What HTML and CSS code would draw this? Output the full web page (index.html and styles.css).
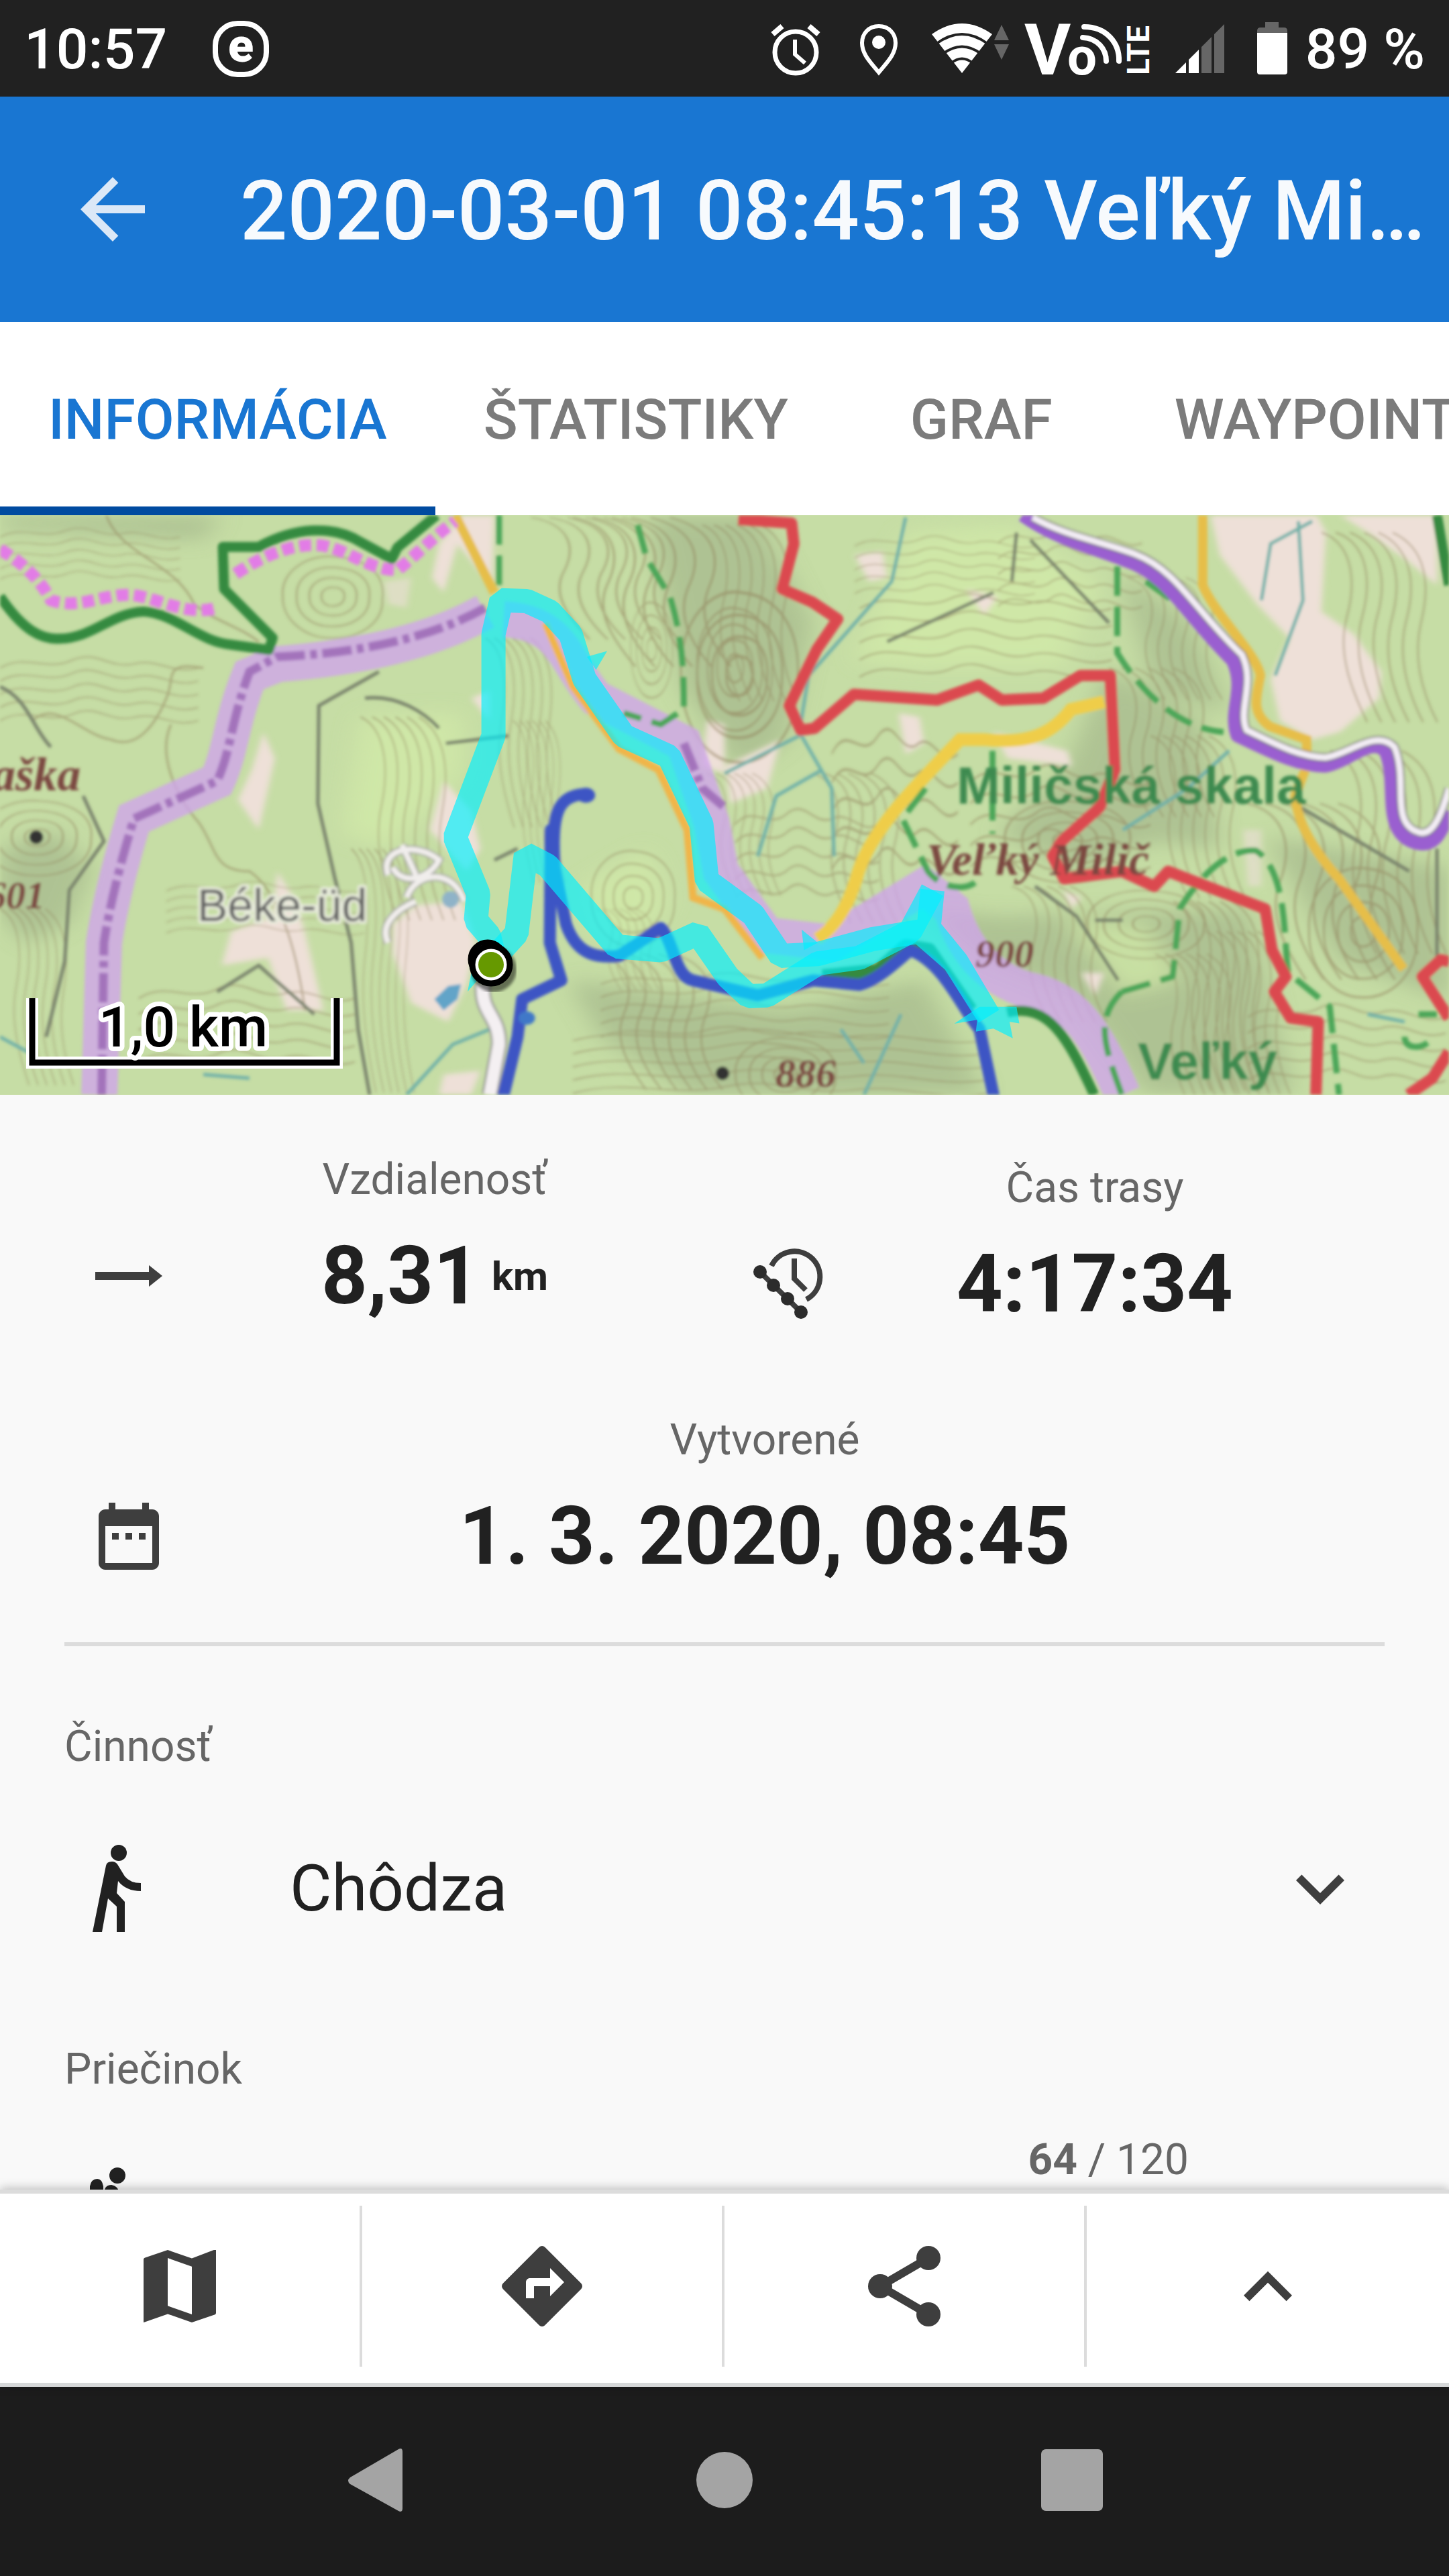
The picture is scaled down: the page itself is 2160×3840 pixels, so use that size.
FILE: index.html
```html
<!DOCTYPE html>
<html lang="sk">

<head>
  <meta charset="utf-8">
  <title>Veľký Milič</title>
  <link rel="stylesheet" href="styles.css">
</head>

<body>
  <div class="status-bar">
    <span class="status-time">10:57</span>
    <svg class="status-icon" width="84" height="84" viewBox="0 0 84 84">
      <rect x="4" y="4" width="76" height="76" rx="33" fill="none" stroke="#fff" stroke-width="8" />
      <text class="badge-letter" x="42" y="61" text-anchor="middle">e</text>
    </svg>
    <div class="status-right">
      <!-- alarm -->
      <svg class="status-icon" width="96" height="84" viewBox="0 0 96 84">
        <g fill="none" stroke="#fff" stroke-width="7">
          <circle cx="40" cy="47" r="31" />
          <path d="M39 28v22l15 13" stroke-width="6" />
          <path d="M6 20L20 8M74 20L60 8" stroke-width="8" />
        </g>
      </svg>
      <!-- location -->
      <svg class="status-icon" width="96" height="84" viewBox="0 0 96 84">
        <path d="M44 8C29 8 19 19 19 33C19 50 32 62 44 77C56 62 69 50 69 33C69 19 59 8 44 8Z" fill="none" stroke="#fff" stroke-width="6" />
        <circle cx="44" cy="32" r="10" fill="#fff" />
      </svg>
      <!-- wifi -->
      <svg class="status-icon" width="120" height="84" viewBox="0 0 120 84">
        <path d="M48 78L3 20Q48 -12 93 20Z" fill="#fff" />
        <path d="M10 34Q48 6 86 34M20 49Q48 28 76 49M32 63Q48 50 64 63" fill="none" stroke="#212121" stroke-width="4" />
        <path d="M107 6l11 23H96zM107 58l11-23H96z" fill="#666" />
      </svg>
      <!-- VoLTE -->
      <svg class="status-icon" width="186" height="84" viewBox="0 0 186 84">
        <text class="volte-v" x="-3" y="80">V</text>
        <text class="volte-o" x="61" y="80">o</text>
        <path d="M86 9C120 9 139 34 138 60M84 25C106 26 119 42 119 60" fill="none" stroke="#fff" stroke-width="8" stroke-linecap="round" />
        <text class="volte-lte" transform="translate(183 81) rotate(-90)">LTE</text>
      </svg>
      <!-- signal -->
      <svg class="status-icon" width="110" height="84" viewBox="0 0 110 84">
        <path d="M12 78L28 62V78ZM32 58L47 43V78H32Z" fill="#fff" />
        <path d="M51 39L66 24V78H51ZM70 20L85 5V78H70Z" fill="#666" />
      </svg>
      <!-- battery -->
      <svg class="status-icon" width="48" height="84" viewBox="0 0 48 84">
        <path d="M12 2h20v8h8q5 0 5 5v4H0v-4q0-5 5-5h7z" fill="#666" />
        <path d="M0 18h45v58q0 4-4 4H4q-4 0-4-4z" fill="#fff" />
      </svg>
      <span>89 %</span>
    </div>
  </div>

  <header class="app-bar">
    <button class="back-button" aria-label="Späť">
      <svg width="144" height="144" viewBox="0 0 24 24">
        <path d="M20 11H7.800l5.600-5.600L12 4l-8 8 8 8 1.400-1.400L7.800 13H20z" fill="#dbe8f7" />
      </svg>
    </button>
    <h1>2020-03-01 08:45:13 Veľký Mi…</h1>
  </header>

  <nav class="tabs">
    <a href="#" class="tab active">INFORMÁCIA</a>
    <a href="#" class="tab">ŠTATISTIKY</a>
    <a href="#" class="tab">GRAF</a>
    <a href="#" class="tab">WAYPOINTY</a>
  </nav>

  <svg class="map" viewBox="0 0 2160 864" preserveAspectRatio="xMidYMid slice">
    <defs>
      <g id="hill">
        <path d="M-90 0C-95-60-40-95 5-88C60-84 96-50 90 5C92 60 45 96-5 92C-50 92-92 50-90 0Z" />
        <path d="M-65 2C-68-45-30-68 5-64C45-60 70-38 66 4C66 44 32 68-4 66C-38 66-66 38-65 2Z" />
        <path d="M-42 0C-44-28-20-44 4-41C30-40 46-24 43 3C43 28 20 44-3 42C-25 42-43 24-42 0Z" />
        <path d="M-20 0C-22-14-8-22 2-20C14-20 23-12 21 1C21 14 10 22-2 21C-12 21-21 12-20 0Z" />
      </g>
      <g id="ridge">
        <path d="M0 0C60 20 70 90 50 160C30 230 60 300 90 360" />
        <path d="M28 0C90 20 100 90 80 160C60 230 85 300 118 360" />
        <path d="M56 0C120 25 130 95 108 165C92 230 112 300 145 360" />
        <path d="M84 0C150 25 158 95 138 165C120 235 140 300 172 360" />
        <path d="M112 0C180 30 186 100 166 170C150 235 168 300 200 360" />
        <path d="M140 0C208 30 214 100 196 170C180 235 196 300 228 360" />
      </g>
      <g id="waves">
        <path d="M0 40C50 0 90 50 140 20C190-10 210 40 260 30C310 10 340 60 390 40" />
        <path d="M0 75C50 35 90 85 140 55C190 25 210 75 260 65C310 45 340 95 390 75" />
        <path d="M0 110C50 70 90 120 140 92C190 60 210 112 260 100C310 80 340 130 390 110" />
        <path d="M0 145C50 105 90 155 140 128C190 96 210 148 260 136C310 116 340 166 390 145" />
        <path d="M0 180C50 140 90 190 140 164C190 132 210 184 260 172C310 152 340 202 390 180" />
      </g>
      <filter id="shade" x="-20%" y="-20%" width="140%" height="140%"><feGaussianBlur stdDeviation="26" /></filter>
      <filter id="edge" x="-10%" y="-10%" width="120%" height="120%"><feGaussianBlur stdDeviation="6" /></filter>
      <filter id="soft" x="0" y="0" width="100%" height="100%"><feGaussianBlur stdDeviation="2" /></filter>
    </defs>

    <rect width="2160" height="864" fill="#c6dda5" />

    <g filter="url(#soft)">
      <svg class="terrain" width="2160" height="864" viewBox="0 14 3136 1540" preserveAspectRatio="none">
        <!-- hill shading -->
        <g fill="#9fb187" opacity=".6" filter="url(#shade)">
          <path d="M0 14H480L440 80L150 60L0 50Z" />
          <path d="M1400 14H1640L1760 300L1700 620L1600 700L1480 480Z" />
          <path d="M0 900L120 850L200 950L150 1100L60 1150L0 1080Z" />
          <path d="M2400 420L2600 560L2640 900L2500 880L2330 960L2160 860L2300 700Z" />
          <path d="M2000 1060L2160 1080L2700 1060L2800 1554H2480L2330 1300L2130 1200Z" />
          <path d="M1230 1250L1700 1330L2000 1250L2130 1554H1500L1300 1400Z" />
          <path d="M2740 870L3136 950V1300L2900 1200Z" />
          <path d="M2420 160L2580 300L2660 540L2500 480Z" />
        </g>
        <!-- lighter woods -->
        <g fill="#d3eba9" opacity=".7" filter="url(#shade)">
          <path d="M1960 60L2200 40L2380 200L2300 420L2000 420L1850 400Z" />
          <path d="M1260 1000L1400 900L1450 1040L1380 1150L1290 1120Z" />
          <path d="M2300 1080L2480 1100L2560 1250L2430 1290Z" />
          <path d="M780 550L1000 540L1000 700L850 900L740 860Z" />
        </g>
        <!-- meadows and fields -->
        <g fill="#eee0d8" filter="url(#edge)">
          <path d="M1000 14H1070L1065 200L1030 150L990 90L960 220L935 180L950 90Z" />
          <path d="M2620 14H2850L2870 60L2860 270L2930 330L2990 430L2985 500L2900 590L2840 610L2770 560L2750 450L2790 340L2720 250L2640 120Z" />
          <path d="M2900 14H3110V200L3040 130L2960 60Z" />
          <path d="M570 590L595 660L560 850L515 770L545 690Z" />
          <path d="M600 960L640 1040L660 1120L700 1330L620 1330L580 1190L480 1210L500 1120L590 1080Z" />
          <path d="M960 720L1020 800L1040 900L1010 960L930 850Z" />
          <path d="M900 1050L1000 1040L1030 1150L1010 1260L970 1360L890 1310L850 1180L850 1100Z" />
          <path d="M1570 680L1690 610L1660 740L1580 780Z" />
          <path d="M1945 540L1990 550L2000 620L1960 650Z" />
          <path d="M2150 590L2310 640L2320 680L2180 660Z" />
          <path d="M1020 500L1060 480V560Z" />
          <path d="M2090 210L2160 230L2130 280Z" />
          <path d="M1850 120L1910 110L1920 180L1880 190Z" />
          <path d="M2300 1010L2340 1030L2320 1060Z" />
          <path d="M2340 1230L2390 1230L2370 1290Z" />
          <path d="M960 1500L1040 1490L1020 1554H950Z" />
          <path d="M1530 560L1568 570V700L1520 680Z" />
          <path d="M2690 850H2730V1000H2700ZM830 190L890 180L880 260L840 250Z" opacity=".6" />
        </g>

        <!-- contour lines -->
        <g class="contours">
          <use href="#hill" transform="translate(720 230) scale(1.2 1.2)" />
          <use href="#hill" transform="translate(80 870) scale(1.3 1.1)" />
          <use href="#hill" transform="translate(1370 1030) scale(1 1.4)" />
          <use href="#hill" transform="translate(1590 420) scale(.9 1.8)" />
          <use href="#hill" transform="translate(1600 440) scale(1.4 2.5)" />
          <use href="#hill" transform="translate(1410 370) scale(.5 1.4)" />
          <use href="#hill" transform="translate(2480 1100) scale(1.4 1)" />
          <use href="#hill" transform="translate(1700 1500) scale(1.2 1.1)" />
          <use href="#hill" transform="translate(2310 880) scale(1.5 1.2)" />
          <use href="#hill" transform="translate(2950 1120) scale(1.3 1.9)" />
          <use href="#ridge" transform="translate(1150 20) scale(1.4 .9)" />
          <use href="#ridge" transform="translate(1240 20) scale(1.5 1.1)" />
          <use href="#ridge" transform="translate(780 550) scale(.9 1.5)" />
          <use href="#ridge" transform="translate(760 900) scale(.6 1.8)" />
          <use href="#ridge" transform="translate(1050 340) scale(.7 1.4)" />
          <use href="#ridge" transform="translate(1110 560) scale(.5 1.2)" />
          <use href="#ridge" transform="translate(1290 1180) scale(1.2 1)" />
          <use href="#ridge" transform="translate(1520 40) scale(.9 1.3)" />
          <use href="#ridge" transform="translate(1530 700) scale(.7 .9)" />
          <use href="#ridge" transform="translate(2400 420) scale(1 1.1)" />
          <use href="#ridge" transform="translate(2490 600) scale(.9 1.2)" />
          <use href="#ridge" transform="translate(2540 1040) scale(.9 1.4)" />
          <use href="#ridge" transform="translate(2440 180) scale(.9 .9)" />
          <use href="#ridge" transform="translate(2700 780) scale(1.4 1.3)" />
          <use href="#ridge" transform="translate(2880 640) scale(1.1 1.5)" />
          <use href="#ridge" transform="translate(2500 1180) scale(.8 1.1)" />
          <use href="#ridge" transform="translate(2610 1120) scale(.8 1.2)" />
          <use href="#ridge" transform="translate(2190 1000) scale(.9 1)" />
          <use href="#ridge" transform="translate(0 1060) scale(.7 1.3)" />
          <use href="#ridge" transform="translate(2860 60) scale(1.1 1.4)" />
          <use href="#ridge" transform="translate(1290 1060) scale(.6 .6)" />
          <use href="#ridge" transform="translate(1760 700) scale(.9 1.1)" />
          <use href="#waves" transform="translate(1860 210) scale(1.4 1.3)" />
          <use href="#waves" transform="translate(1850 60) scale(1 .9)" />
          <use href="#waves" transform="translate(1800 560) scale(.7 2.2)" />
          <use href="#waves" transform="translate(1590 780) scale(.8 1.4)" />
          <use href="#waves" transform="translate(0 380) scale(1.1 1)" />
          <use href="#waves" transform="translate(0 40) scale(1 .8)" />
          <use href="#waves" transform="translate(1300 1220) scale(1.6 1)" />
          <use href="#waves" transform="translate(1240 1370) scale(2.3 1)" />
          <use href="#waves" transform="translate(2700 1300) scale(1.1 1.2)" />
          <use href="#waves" transform="translate(300 1250) scale(1.2 1.2)" />
          <use href="#waves" transform="translate(2100 660) scale(1 1.6)" />
          <use href="#waves" transform="translate(2160 40) scale(.8 1.2)" />
          <use href="#waves" transform="translate(360 980) scale(1.1 .8)" />
          <path d="M70 560C120 500 180 600 240 610C300 640 340 560 360 500C380 450 350 400 440 420" />
          <path d="M370 570C340 650 380 760 430 830C470 900 460 960 540 960C600 1010 640 1150 660 1330" />
          <path d="M230 14C260 120 380 140 420 250C470 300 520 310 560 350" />
        </g>

        <!-- paths and streams -->
        <g class="footpaths">
          <path d="M820 430L690 520L688 780L725 980L760 1150L775 1380L800 1554" />
          <path d="M790 500C860 490 920 540 950 580" />
          <path d="M0 470C60 500 70 580 110 630" />
          <path d="M180 760L225 880L150 1010L140 1200L100 1400" />
          <path d="M2200 60L2190 190M2230 80L2400 300M1920 350L2150 220" />
          <path d="M2240 1000L2330 1080L2420 1250M2370 1090H2430" />
          <path d="M3110 900V1200M2800 780L3050 960" />
          <path d="M965 620L1100 600M1070 930L1120 900M470 1280L560 1210L680 1340" />
        </g>
        <g class="streams">
          <path d="M1960 20L1930 190L1750 440L1730 590L1800 740L1805 920" />
          <path d="M1730 600L1568 700M1780 690L1680 760L1640 920" />
          <path d="M2810 30L2820 240L2760 440M2840 30L2750 90L2730 240" />
          <path d="M2660 640L2570 740L2430 850" />
          <path d="M880 1554L980 1420L1060 1380M0 1400L60 1440M440 1500L540 1510" />
          <path d="M1950 1340L1870 1554M1820 1380L1870 1470M2960 1340L3040 1360" />
        </g>

        <!-- village lanes and pond -->
        <g fill="none" stroke="#a3a3a3" stroke-width="12">
          <path d="M840 970C820 900 900 880 950 930C930 980 870 1000 850 950M880 1030C900 960 980 950 1005 1040M870 890L900 970M840 1150C820 1100 860 1060 900 1040" />
        </g>
        <g fill="none" stroke="#f1eeec" stroke-width="8">
          <path d="M840 970C820 900 900 880 950 930C930 980 870 1000 850 950M880 1030C900 960 980 950 1005 1040M870 890L900 970M840 1150C820 1100 860 1060 900 1040" />
        </g>
        <path d="M940 1300L970 1265L998 1260L990 1300L960 1330Z" fill="#62a4c8" />
        <ellipse cx="975" cy="1035" rx="18" ry="22" fill="#8fb3c8" />

        <!-- protected area border -->
        <g class="border-wide">
          <path d="M1050 270C950 340 800 390 600 410L540 440C500 560 500 640 470 720L290 820C270 900 240 1030 225 1150L215 1554" />
          <path d="M1090 290C1220 300 1220 400 1290 500L1480 620L1540 830L1560 960L1660 1130L1800 1150L2000 1000L2060 1060C2090 1190 2160 1260 2240 1280C2340 1310 2380 1420 2430 1554" />
        </g>
        <path class="border-dash" d="M1050 260C950 330 800 380 600 390L540 430C500 560 500 640 470 720L290 820C270 900 240 1030 225 1150L220 1554" />
        <path class="border-dash" d="M1480 620L1520 740L1568 790" />

        <!-- white roads -->
        <path d="M1045 1260C1040 1340 1080 1340 1080 1420L1060 1554" fill="none" stroke="#999" stroke-width="24" />
        <path d="M1045 1260C1040 1340 1080 1340 1080 1420L1060 1554" fill="none" stroke="#f4f0f2" stroke-width="18" />

        <!-- yellow roads -->
        <g fill="none" stroke="#e6be48" stroke-width="14">
          <path d="M985 14L1070 220" />
          <path d="M1180 300L1240 470L1340 635L1425 690L1487 850L1500 1030L1568 1060L1650 1190" stroke="#f0b548" stroke-width="11" />
          <path d="M2603 14V200C2630 280 2718 380 2728 440C2718 500 2708 540 2748 575L2828 610V680L2803 760C2808 850 2868 940 2898 980L3038 1220" />
          <path d="M2390 510L2318 530C2268 610 2208 620 2128 610L2078 610C1968 750 1888 850 1858 960C1838 1050 1808 1110 1768 1140" stroke="#efcd4a" stroke-width="19" />
        </g>

        <!-- hiking trails -->
        <g fill="none" stroke-linejoin="round">
          <g stroke="#e27be6" stroke-width="18" stroke-dasharray="18 8">
            <path d="M0 105C50 140 90 190 110 240C170 265 220 225 280 225C340 230 400 285 470 260" />
            <path d="M510 170C570 120 640 85 700 95C760 110 800 160 860 160C900 120 940 70 985 30" />
          </g>
          <g stroke="#348a40" stroke-width="15">
            <path d="M0 230C50 320 90 345 130 342C200 340 240 275 310 270C380 275 430 350 500 358L582 372L590 340L485 210L482 98L560 98C640 45 720 40 780 85L848 130L860 100L945 14" />
            <path d="M2180 1335C2270 1310 2310 1400 2368 1554" />
            <path d="M3110 14L3136 200" />
            <path d="M1780 1240L1900 1225L1960 1160L2010 1170L2100 1330" stroke-width="22" />
          </g>
          <g stroke="#4ba658" stroke-width="9" stroke-dasharray="44 16">
            <path d="M2418 150V380C2468 480 2548 580 2648 590" />
            <path d="M2003 740L1953 820L2008 960C2040 1010 2090 1010 2110 990" />
            <path d="M2148 640V860" />
            <path d="M2428 1280L2538 1240L2553 1060C2608 950 2668 900 2718 905C2788 960 2778 1150 2788 1230L2878 1320L2898 1554" />
            <path d="M2428 1280C2370 1350 2388 1420 2428 1554" />
            <path d="M1380 40L1400 130L1450 230C1480 350 1480 450 1480 530L1430 570L1350 540" />
            <path d="M1080 14V210" />
            <path d="M2480 190L2560 260M3040 1400C3040 1440 3090 1430 3100 1400M3070 1340H3110" />
          </g>
          <g stroke="#3d55c4" stroke-width="18" stroke-linecap="round">
            <path d="M1265 755C1200 760 1195 820 1200 950L1225 1100C1250 1190 1300 1190 1340 1185L1430 1110C1460 1150 1460 1240 1500 1250L1640 1290L1760 1250L1860 1262C1900 1250 1940 1200 1970 1170C2040 1200 2080 1320 2120 1380L2150 1554" />
            <path d="M1192 850L1190 1150L1215 1250L1130 1300L1120 1400L1090 1554" />
          </g>
          <circle cx="1268" cy="758" r="20" fill="#3d55c4" />
          <circle cx="1140" cy="1350" r="18" fill="#3f78c8" />
          <g stroke="#db4850" stroke-width="17">
            <path d="M1598 25L1713 35L1718 90L1693 210L1758 245L1813 290L1768 370L1708 520L1733 585L1763 580L1848 490L2028 505L2118 465L2168 505L2258 500L2338 440H2403L2413 690L2380 790L2298 880L2278 920L2303 980L2428 960L2498 1000L2528 960L2738 1060L2753 1170L2783 1240L2758 1280L2793 1350L2853 1360L2848 1554" />
            <path d="M3136 1350L3078 1240L3118 1195L3136 1200M3136 1440L3100 1510L3048 1554" />
          </g>
          <path d="M2213 14C2288 80 2368 100 2438 135C2528 170 2568 280 2668 400C2698 480 2658 530 2678 600C2748 640 2808 680 2868 680C2918 670 2968 600 2998 640C3028 720 2988 850 3058 882C3098 900 3118 870 3136 800" stroke="#9a5fd0" stroke-width="20" />
          <path d="M2235 20C2308 70 2388 85 2458 118C2548 160 2588 270 2688 385C2718 460 2678 530 2698 585C2758 620 2808 655 2868 658C2918 650 2978 580 3018 630C3048 720 3008 830 3068 855C3098 870 3118 820 3136 740" stroke="#777" stroke-width="13" />
          <path d="M2235 20C2308 70 2388 85 2458 118C2548 160 2588 270 2688 385C2718 460 2678 530 2698 585C2758 620 2808 655 2868 658C2918 650 2978 580 3018 630C3048 720 3008 830 3068 855C3098 870 3118 820 3136 740" stroke="#f3edf5" stroke-width="9" />
        </g>
      </svg>

      <g class="place-peak">
        <text x="-12" y="410" font-size="70">aška</text>
        <text x="-20" y="586" font-size="58">601</text>
        <text x="1381" y="536" font-size="68">Veľký Milič</text>
        <text x="1454" y="673" font-size="58">900</text>
        <text x="1156" y="852" font-size="60">886</text>
      </g>
      <circle cx="54" cy="480" r="10" fill="#333" />
      <circle cx="1077" cy="832" r="10" fill="#333" />
      <text class="place-village" x="294" y="605">Béke-üd</text>
      <g class="place-nature">
        <text x="1426" y="430" font-size="78">Miličská skala</text>
        <text x="1696" y="841" font-size="78">Veľký</text>
      </g>
    </g>

    <!-- recorded track -->
    <svg width="2160" height="864" viewBox="0 14 3136 1540" preserveAspectRatio="none">
      <g class="track">
        <path d="M1070 1190L1118 1125L1138 915L1185 945L1335 1160L1430 1170L1510 1125L1575 1240L1620 1292L1660 1290L1770 1205L1860 1190L1970 1120L2018 1010" />
        <path d="M2018 1010L2010 1110L2070 1200L2140 1345L2065 1200L1990 1120L1890 1140L1770 1180L1690 1185L1630 1075L1530 985L1518 835L1448 655L1350 600L1265 450L1235 330L1190 270L1140 242L1085 240L1068 330L1068 600L985 870L1035 1020L1030 1090L1058 1130L1070 1190" />
      </g>
      <path d="M2065 1365L2120 1320L2200 1320L2206 1364L2185 1360L2192 1404L2150 1378L2112 1386L2115 1355ZM1735 1115L1770 1150L1740 1170ZM1314 375L1270 390L1290 425ZM1012 1280L1020 1230L1040 1240Z" fill="#00f0ff" opacity=".65" />
    </svg>

    <!-- start and finish marker -->
    <circle cx="736" cy="677" r="34" fill="#000" opacity=".5" filter="url(#soft)" />
    <circle cx="727" cy="662" r="26" fill="#fff" stroke="#000" stroke-width="7" />
    <circle cx="732" cy="670" r="28" fill="#fff" stroke="#000" stroke-width="9" />
    <circle cx="732" cy="670" r="19" fill="#690" />

    <!-- scale -->
    <path d="M48 720V816H502V720" fill="none" stroke="#fff" stroke-width="18" />
    <path d="M48 720V816H502V720" fill="none" stroke="#000" stroke-width="9" />
    <text class="scale-text" x="273" y="792" text-anchor="middle">1,0 km</text>
  </svg>

  <main class="details">
    <div class="stats">
      <div class="stat stat-distance">
        <svg class="stat-icon" width="144" height="144" viewBox="0 0 144 144">
          <path d="M22 66h80V56l20 16-20 16V78H22z" fill="#3e3e3e" />
        </svg>
        <div class="stat-label">Vzdialenosť</div>
        <div class="stat-value">8,31<span class="unit">km</span></div>
      </div>
      <div class="stat">
        <svg class="stat-icon" width="144" height="144" viewBox="0 0 144 144">
          <g fill="none" stroke="#3e3e3e" stroke-width="8">
            <path d="M46 45A38 38 0 1 1 98 95" />
            <path d="M80 34V64L97 81" />
            <path d="M29 54L90 114" />
          </g>
          <g fill="#2c2c2c">
            <circle cx="29" cy="54" r="10" />
            <circle cx="49" cy="74" r="10" />
            <circle cx="70" cy="94" r="10" />
            <circle cx="90" cy="114" r="10" />
          </g>
        </svg>
        <div class="stat-label">Čas trasy</div>
        <div class="stat-value">4:17:34</div>
      </div>
      <div class="stat stat-wide">
        <svg class="stat-icon" width="120" height="120" viewBox="0 0 24 24">
          <path d="M9 11H7v2h2v-2zm4 0h-2v2h2v-2zm4 0h-2v2h2v-2zm2-7h-1V2h-2v2H8V2H6v2H5c-1.100 0-2 .9-2 2v14c0 1.100.9 2 2 2h14c1.100 0 2-.9 2-2V6c0-1.100-.9-2-2-2zm0 16H5V9h14v11z" fill="#3e3e3e" />
        </svg>
        <div class="stat-label">Vytvorené</div>
        <div class="stat-value">1. 3. 2020, 08:45</div>
      </div>
    </div>

    <label class="field-label" for="activity">Činnosť</label>
    <div class="field">
      <svg width="144" height="144" viewBox="0 0 144 144" fill="#212121">
        <circle cx="81" cy="19" r="12" />
        <path d="M62 38Q63 32 71 32Q76 32 79 36L90 54Q98 64 114 64V76Q92 76 80 61L78 79L90 92V137H78V99L65 87L56 137H42Z" />
      </svg>
      <select id="activity">
        <option>Chôdza</option>
      </select>
      <svg width="144" height="144" viewBox="0 0 24 24">
        <path d="M7.410 8.590L12 13.170l4.590-4.580L18 10l-6 6-6-6z" fill="#3e3e3e" />
      </svg>
    </div>

    <div class="field-label">Priečinok</div>
    <div class="field">
      <svg width="144" height="144" viewBox="0 0 144 144" fill="#212121">
        <circle cx="79" cy="19" r="12" />
        <path d="M38 60V35Q40 24 49 24Q56 24 58 35V60Z" />
        <path d="M60 40Q62 33 70 33Q76 34 79 38L90 58L112 66V76L82 66L78 82L90 96V140H78V102L65 92L56 140H42Z" />
      </svg>
      <div class="count"><b>64</b> / 120</div>
    </div>
  </main>

  <div class="actions">
    <button aria-label="Mapa">
      <svg width="144" height="144" viewBox="0 0 24 24">
        <path d="M20.500 3l-.16.030L15 5.100 9 3 3.360 4.900c-.21.070-.36.250-.36.480V21l.16-.03L9 18.900l6 2.100 5.640-1.900c.21-.07.36-.25.36-.48V3zM15 19l-6-2.110V5l6 2.110V19z" fill="#3e3e3e" />
      </svg>
    </button>
    <button aria-label="Navigovať">
      <svg width="144" height="144" viewBox="0 0 24 24">
        <path d="M21.710 11.290l-9-9a1 1 0 0 0-1.410 0l-9 9a1 1 0 0 0 0 1.410l9 9c.39.390 1.020.390 1.410 0l9-9a1 1 0 0 0 0-1.410zM14 14.500V12h-4v3H8v-4c0-.55.450-1 1-1h5V7.500l3.500 3.500-3.500 3.500z" fill="#3e3e3e" />
      </svg>
    </button>
    <button aria-label="Zdieľať">
      <svg width="144" height="144" viewBox="0 0 24 24">
        <path d="M18 5L6 12L18 19" fill="none" stroke="#3e3e3e" stroke-width="2" />
        <g fill="#3e3e3e">
          <circle cx="18" cy="5" r="3" />
          <circle cx="6" cy="12" r="3" />
          <circle cx="18" cy="19" r="3" />
        </g>
      </svg>
    </button>
    <button aria-label="Viac">
      <svg width="144" height="144" viewBox="0 0 24 24">
        <path d="M12 8.300l-6 6 1.410 1.410L12 11.130l4.590 4.580L18 14.300z" fill="#3e3e3e" />
      </svg>
    </button>
  </div>

  <div class="nav-bar">
    <button aria-label="Naspäť">
      <svg width="96" height="96" viewBox="0 0 96 96">
        <path d="M8 44L80 2Q86-1 86 6V90Q86 97 80 94L8 54Q2 49 8 44Z" fill="#a4a4a4" />
      </svg>
    </button>
    <button aria-label="Domov">
      <svg width="96" height="96" viewBox="0 0 96 96">
        <circle cx="48" cy="48" r="42" fill="#a4a4a4" />
      </svg>
    </button>
    <button aria-label="Prehľad">
      <svg width="96" height="96" viewBox="0 0 96 96">
        <rect x="2" y="2" width="92" height="92" rx="7" fill="#a4a4a4" />
      </svg>
    </button>
  </div>
</body>

</html>
```
FILE: styles.css
```css
:root {
  --blue: #1976d2;
  --dark-blue: #004ba0;
  --status: #212121;
  --text: #212121;
  --label: #666;
  --line: #dcdcdc;
}

* {
  box-sizing: border-box;
}

body {
  margin: 0;
  height: 100vh;
  display: flex;
  flex-direction: column;
  overflow: hidden;
  background-color: #f9f9f9;
  color: var(--text);
  font-family: Roboto, sans-serif;
}

button {
  border: none;
  padding: 0;
  background: none;
  cursor: pointer;
}

svg {
  display: block;
  flex-shrink: 0;
}

/* Status bar */
.status-bar {
  flex-shrink: 0;
  display: flex;
  align-items: center;
  height: 144px;
  padding: 2px 36px 0;
  background-color: var(--status);
  color: #fff;
  font-size: 84px;
  font-weight: 500;
}

.status-time {
  margin-right: 68px;
}

.status-right {
  display: flex;
  align-items: center;
  gap: 24px;
  margin-left: auto;
}

.status-icon {
  overflow: visible;
}

.status-icon text {
  fill: #fff;
  font-weight: 700;
}

.status-icon .badge-letter {
  font-size: 70px;
  font-weight: 900;
}

.volte-v {
  font-size: 106px;
}

.volte-o {
  font-size: 78px;
}

.volte-lte {
  font-size: 46px;
}

/* Title bar */
.app-bar {
  flex-shrink: 0;
  display: flex;
  align-items: center;
  gap: 118px;
  height: 336px;
  padding: 0 24px 0 96px;
  background-color: var(--blue);
}

.app-bar h1 {
  margin: 0;
  padding-top: 4px;
  color: #f7fafd;
  font-size: 124px;
  font-weight: 500;
  white-space: nowrap;
}

/* Tabs */
.tabs {
  flex-shrink: 0;
  display: flex;
  height: 288px;
  overflow: hidden;
  background-color: #fff;
}

.tab {
  flex-shrink: 0;
  display: flex;
  align-items: center;
  justify-content: center;
  min-width: 432px;
  padding: 0 72px;
  border-top: 16px solid transparent;
  border-bottom: 13px solid transparent;
  color: #7b7b7b;
  font-size: 84px;
  font-weight: 500;
  text-decoration: none;
}

.tab.active {
  color: var(--blue);
  border-bottom-color: var(--dark-blue);
}

/* Map */
.map {
  width: 100%;
  aspect-ratio: 5 / 2;
}

.terrain path,
.track path {
  vector-effect: non-scaling-stroke;
}

.contours {
  fill: none;
  stroke: #8f7c58;
  stroke-width: 3px;
  opacity: 0.55;
}

.footpaths {
  fill: none;
  stroke: #77806a;
  stroke-width: 5px;
}

.streams {
  fill: none;
  stroke: #6fb0a8;
  stroke-width: 5px;
}

.border-wide {
  fill: none;
  stroke: #d0a4ec;
  stroke-width: 54px;
  opacity: 0.78;
}

.border-dash {
  fill: none;
  stroke: #a373bb;
  stroke-width: 13px;
  stroke-dasharray: 44 8 10 8;
}

.track {
  fill: none;
  stroke: #00f0ff;
  stroke-width: 36px;
  stroke-linejoin: bevel;
}

.track path {
  opacity: 0.66;
}

.map text {
  paint-order: stroke;
  stroke-linejoin: round;
}

.place-peak {
  fill: #7a4640;
  font-family: "Liberation Serif", serif;
  font-style: italic;
  font-weight: 700;
}

.place-village {
  fill: #606060;
  stroke: #e8ecdc;
  stroke-width: 8px;
  font-family: "Liberation Sans", sans-serif;
  font-size: 68px;
}

.place-nature {
  fill: #3c8a50;
  font-family: "Liberation Sans", sans-serif;
  font-weight: 700;
}

.scale-text {
  fill: #000;
  stroke: #fff;
  stroke-width: 14px;
  font-size: 84px;
  font-weight: 500;
}

/* Track details */
.details {
  flex: 1;
  min-height: 0;
  overflow: hidden;
  padding: 82px 96px 0;
}

.stats {
  display: grid;
  grid-template-columns: 1fr 1fr;
  row-gap: 76px;
  align-items: center;
  padding-bottom: 58px;
  border-bottom: 6px solid var(--line);
}

.stat {
  display: grid;
  grid-template-columns: 192px 1fr;
  grid-template-rows: 88px 200px;
  align-items: center;
  padding-right: 72px;
  text-align: center;
}

.stat-distance {
  padding-bottom: 24px;
}

.stat-wide {
  grid-column: span 2;
}

.stat-icon {
  grid-row: 2;
  justify-self: center;
}

.stat-label {
  grid-column: 2;
  color: var(--label);
  font-size: 64px;
}

.stat-value {
  grid-column: 2;
  font-size: 120px;
  font-weight: 700;
}

.unit {
  margin-left: 18px;
  font-size: 60px;
  vertical-align: 20px;
  line-height: 1;
}

.field-label {
  display: block;
  margin-top: 106px;
  color: var(--label);
  font-size: 64px;
  line-height: 88px;
}

.field {
  position: relative;
  display: flex;
  align-items: center;
  height: 144px;
  margin: 95px 24px 154px 0;
}

.field + .field-label {
  margin-top: 0;
}

.field select {
  flex: 1;
  margin-left: 192px;
  padding: 0;
  border: none;
  background: none;
  appearance: none;
  color: var(--text);
  font-family: inherit;
  font-size: 96px;
}

/* The counter sits above the folder row */
.count {
  position: absolute;
  top: -48px;
  right: 268px;
  color: var(--label);
  font-size: 64px;
  line-height: 88px;
}

/* Bottom toolbar */
.actions {
  position: relative;
  flex-shrink: 0;
  display: grid;
  grid-template-columns: repeat(4, 1fr);
  height: 294px;
  padding: 18px 0 24px;
  border-top: 6px solid var(--line);
  border-bottom: 6px solid #d6d8d9;
  background-color: #fff;
  box-shadow: 0 -2px 14px rgba(0, 0, 0, 0.25);
}

.actions button {
  display: flex;
  align-items: center;
  justify-content: center;
  border-right: 4px solid var(--line);
}

.actions button:last-child {
  border-right: none;
}

/* System navigation */
.nav-bar {
  flex-shrink: 0;
  display: flex;
  align-items: center;
  justify-content: center;
  height: 282px;
  padding-bottom: 4px;
  background-color: #1c1c1c;
}

.nav-bar button {
  display: flex;
  justify-content: center;
  width: 24%;
}
```
